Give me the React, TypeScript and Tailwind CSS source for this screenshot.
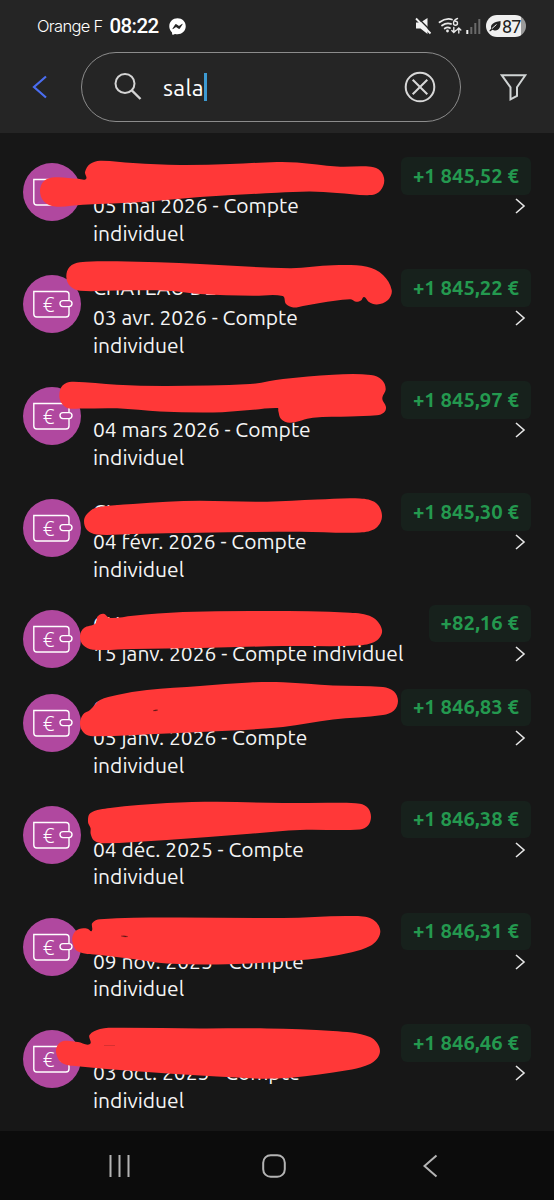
import React from "react";
import { FaFacebookMessenger } from "react-icons/fa";

interface Transaction {
  title: string;
  date: string;
  amount: string;
  short?: boolean;
}

const transactions: Transaction[] = [
  { title: "", date: "05 mai 2026", amount: "+1 845,52 €" },
  { title: "CHATEAU DE", date: "03 avr. 2026", amount: "+1 845,22 €" },
  { title: "", date: "04 mars 2026", amount: "+1 845,97 €" },
  { title: "CHAT", date: "04 févr. 2026", amount: "+1 845,30 €" },
  { title: "CHAT", date: "15 janv. 2026", amount: "+82,16 €", short: true },
  { title: "C", date: "05 janv. 2026", amount: "+1 846,83 €" },
  { title: "", date: "04 déc. 2025", amount: "+1 846,38 €" },
  { title: "", date: "09 nov. 2025", amount: "+1 846,31 €" },
  { title: "", date: "03 oct. 2025", amount: "+1 846,46 €" },
];

type Point = [number, number];

// Outlines of the marker strokes, clockwise from the left end
const strokes: Point[][] = [
  [[40, 191], [44, 181], [55, 177.3], [78, 178.8], [86, 179], [85, 172], [90, 164], [100, 160.7], [133, 163], [180, 165], [230, 164], [277, 162], [297, 162.5], [337, 166.5], [371, 166.8], [380.5, 171], [384.3, 180.5], [380.5, 190.5], [372, 195], [337, 193], [310, 191.5], [277, 192.8], [200, 197], [143, 202], [83, 204.8], [55, 206.5], [44, 201.5]],
  [[66.3, 276.7], [69.5, 267], [80, 262.3], [117, 261.3], [200, 264], [290, 268.3], [333, 265.3], [367, 266.8], [383, 275], [391.7, 290], [388, 300], [377, 304.5], [369, 302], [364, 297], [361, 300.5], [356, 301.7], [350, 299.3], [320, 303], [303, 306], [293.3, 307.5], [286, 304], [282.7, 296], [253, 295.8], [200, 294], [167, 290.7], [117, 290.5], [80, 290.7], [70, 286]],
  [[59.3, 395], [62.5, 385.5], [71.7, 381.7], [117, 384.7], [167, 386], [250, 384], [283, 379], [333, 374.7], [371, 375], [382, 380], [385.7, 389], [382.3, 398.5], [386, 407], [384, 412.5], [377, 415.3], [350, 416.5], [313, 417.7], [290, 422.7], [281, 419], [278.3, 411], [277.7, 408], [250, 410], [213, 412.5], [160, 411.5], [117, 408.3], [80, 408.5], [68, 408.2], [61.5, 403]],
  [[84, 521], [87, 514], [96.7, 507.5], [133, 504], [167, 501.7], [200, 500.7], [267, 501.7], [317, 499.5], [360, 498.5], [376, 503], [382, 516], [376, 528], [360, 532.5], [300, 531.7], [200, 532.8], [133, 534], [96.7, 534.5], [87, 530]],
  [[80, 636], [84, 628], [95.5, 623.5], [97.5, 616.5], [103.5, 613.7], [110, 618], [133, 615.7], [183, 612], [267, 611], [350, 612.7], [372, 617], [382, 630], [376, 641], [357, 645.5], [283, 646], [200, 648], [133, 649], [93, 649.7], [83, 645]],
  [[80, 724], [83, 714.5], [90, 710], [100, 700], [117, 695], [147, 690], [200, 686], [250, 682.5], [283, 682.3], [333, 685.5], [383, 687], [394, 691.5], [398, 701], [394, 710.5], [383, 715], [333, 719.5], [283, 727], [233, 730.5], [167, 733.5], [93, 736.3], [84, 733]],
  [[88, 822], [90.5, 813], [110, 808], [167, 803], [217, 801.7], [283, 803], [333, 802.7], [360, 803.7], [368, 808], [371, 817], [368, 825.5], [360, 829.5], [300, 830], [250, 833.7], [167, 840], [103, 843.3], [94, 840.5], [90.7, 834], [90.5, 828]],
  [[72.3, 941], [74, 933], [79, 929], [87.5, 928.7], [91.7, 931], [92.3, 923], [100, 919.3], [167, 917.5], [283, 918], [350, 916], [372, 919], [380.3, 932], [370, 946], [333, 956], [283, 961.5], [217, 964.5], [167, 963.5], [133, 959], [100, 955], [78, 951.5]],
  [[56, 1052], [58.5, 1044], [65, 1040.8], [78, 1042], [90, 1044], [89.5, 1035], [100, 1029], [117, 1027.7], [200, 1028.5], [267, 1028.5], [333, 1031], [370, 1037], [380, 1051], [370, 1064], [333, 1072.5], [277, 1078.5], [217, 1076.5], [133, 1071], [80, 1066.5], [62, 1063]],
];

// Closed curve running through every point
const toPath = (points: Point[]) => {
  const n = points.length;
  let d = `M${points[0][0]} ${points[0][1]}`;
  for (let i = 0; i < n; i++) {
    const a = points[(i - 1 + n) % n];
    const b = points[i];
    const c = points[(i + 1) % n];
    const e = points[(i + 2) % n];
    const len = Math.hypot(c[0] - b[0], c[1] - b[1]);
    const before = Math.hypot(c[0] - a[0], c[1] - a[1]) || 1;
    const after = Math.hypot(e[0] - b[0], e[1] - b[1]) || 1;
    const k = len / 3;
    const x1 = b[0] + ((c[0] - a[0]) / before) * k;
    const y1 = b[1] + ((c[1] - a[1]) / before) * k;
    const x2 = c[0] - ((e[0] - b[0]) / after) * k;
    const y2 = c[1] - ((e[1] - b[1]) / after) * k;
    d += `C${x1} ${y1} ${x2} ${y2} ${c[0]} ${c[1]}`;
  }
  return d + "Z";
};

const StatusBar: React.FC = () => (
  <div className="flex h-[52px] items-center pl-[37px] pr-[28px] text-white font-['Roboto',sans-serif]">
    <span className="w-[72.5px] whitespace-nowrap font-['Inter',sans-serif] text-[16.5px] font-light tracking-[-0.7px]">
      Orange F
    </span>
    <span className="w-[59.5px] whitespace-nowrap text-[20.5px] font-medium tracking-[-0.6px]">
      08:22
    </span>
    <FaFacebookMessenger className="mt-px size-[17px]" />
    <svg className="ml-auto h-[22px] w-[66px]" viewBox="415 15 66 22" fill="none">
      <path d="M416 22.5h4.500l7-4.500v16l-7-5.500H416z" fill="#f2f2f2" />
      <path d="M417.500 17.500L432 32" stroke="#252525" strokeWidth="1.400" />
      <path d="M416 18.500L430.500 33.500" stroke="#f2f2f2" strokeWidth="1.800" />
      <g stroke="#e8e8e8" strokeWidth="1.8" strokeLinecap="round">
        <path d="M439.5 22.3q6.500-4.800 12.500-2.800" />
        <path d="M442 25.500q4.500-3.200 9-1.600" />
        <path d="M444.700 28.500q2.800-1.900 5.300-.4" />
        <path d="M457.500 18.500q-4 1.500-4 4.700a2 2 0 1 0 2-2" strokeWidth="1.400" />
        <path d="M453.800 27.500v5m-2-2l2 2 2-2M458.800 33v-5m-2 2l2-2 2 2" strokeWidth="1.400" />
      </g>
      <circle cx="447.500" cy="31" r="1.400" fill="#e8e8e8" />
      <path d="M467.300 30v4" stroke="#f2f2f2" strokeWidth="2" />
      <path d="M471.300 27v7M475.300 23v11M479.300 19v15" stroke="#6a6a6a" strokeWidth="2" />
    </svg>
    <div className="ml-[5px] flex h-[22px] w-[40px] items-center overflow-hidden rounded-full bg-linear-to-r from-[#f0f0f0] from-[88%] to-[#9a9a9a] to-[88%] pl-[3px] text-[#222]">
      <svg className="h-[12px] w-[12px] shrink-0" viewBox="0 0 12 12">
        <path d="M11.500 1C12 7 10 10.500 6.500 10.500c-1.500 0-2.300-.3-3-.8L1 11.500l-.7-.8L2.300 8.500C1 4.500 4.500 2 11.500 1z" fill="#222" />
        <path d="M3 8.500l4.500-4" stroke="#f0f0f0" strokeWidth="1" />
      </svg>
      <span className="ml-px text-[18px] tracking-[-0.8px]">87</span>
    </div>
  </div>
);

const SearchHeader: React.FC = () => (
  <div className="flex h-[70px] items-center pl-[32px] pr-[27px]">
    <svg className="h-[24px] w-[16px]" viewBox="0 0 16 24" fill="none">
      <path d="M14 1.500L2 12 14 22.500" stroke="#4a6df0" strokeWidth="2.200" />
    </svg>
    <div className="ml-[33px] flex h-[69.5px] w-[380px] items-center rounded-full border-[1.500px] border-[#8c8c8c] pl-[32px] pr-[24px]">
      <svg className="size-[28px]" viewBox="0 0 28 28" fill="none" stroke="#d4d4d4" strokeWidth="2">
        <circle cx="11" cy="10.500" r="9.500" />
        <path d="M17.800 17.300L26.500 26" strokeWidth="2.400" />
      </svg>
      <span className="ml-[21px] mt-[2px] text-[23px] tracking-[0.3px] text-white">
        sala
      </span>
      <span className="h-[28px] w-[3px] bg-[#3d9ad1]"></span>
      <svg className="ml-auto size-[32px]" viewBox="0 0 32 32" fill="none" stroke="#d8d8d8">
        <circle cx="16" cy="16" r="14.300" strokeWidth="2" />
        <path d="M8.700 8.700l14.600 14.600M23.300 8.700L8.700 23.300" strokeWidth="2" />
      </svg>
    </div>
    <svg className="ml-auto h-[28px] w-[27px]" viewBox="0 0 27 28" fill="none">
      <path
        d="M1.700 2.200h23.600L17 14.300v8.500l-6.500 3.500v-12z"
        stroke="#d0d4d4"
        strokeWidth="2"
      />
    </svg>
  </div>
);

const WalletIcon: React.FC = () => (
  <svg className="mt-[15.500px] size-[58px] shrink-0" viewBox="0 0 58 58" fill="none">
    <circle cx="29" cy="29" r="29" fill="#b0489f" />
    <g stroke="#fff" strokeWidth="1.400">
      <path d="M46 25.300V19.500a3 3 0 0 0-3-3H10.800V39a3 3 0 0 0 3 3H43a3 3 0 0 0 3-3v-7.300" />
      <rect x="37" y="25.600" width="12" height="6" rx="3" />
    </g>
    <text
      x="25.500"
      y="36.700"
      textAnchor="middle"
      fill="#fff"
      fontSize="20.5"
      className="font-['Noto_Sans',sans-serif] font-light"
    >
      €
    </text>
  </svg>
);

const TransactionRow: React.FC<Transaction> = ({
  title,
  date,
  amount,
  short,
}) => {
  return (
    <li
      className={
        short
          ? "flex h-[84px] pl-[23px] pr-[23px]"
          : "flex h-[111.850px] pl-[23px] pr-[23px]"
      }
    >
      <WalletIcon />
      <div className="ml-[12px] w-0 grow pt-[15px] text-[21px] leading-[27.700px] text-[#f5f5f5]">
        <p className="h-[30px] whitespace-nowrap">{title}</p>
        <p className="whitespace-nowrap">
          {date} - Compte
          {short ? " " : <br />}
          individuel
        </p>
      </div>
      <div className="flex flex-col items-end pt-[10px]">
        <span className="flex h-[37.500px] items-center rounded-[6px] bg-[#17211c] px-[12px] text-[20.300px] font-bold whitespace-nowrap text-[#24994f]">
          {amount}
        </span>
        <svg className="mt-[3.500px] mr-[5px] h-[16px] w-[12px]" viewBox="0 0 12 16" fill="none">
          <path d="M2 1l8 7-8 7" stroke="#e6e6e6" strokeWidth="1.600" />
        </svg>
      </div>
    </li>
  );
};

const NavigationBar: React.FC = () => (
  <div className="flex h-[69.500px] items-center bg-[#0c0c0c] pt-[2px] pl-[108px]">
    <svg className="h-[24px] w-[24px]" viewBox="0 0 24 24">
      <path d="M2.500 1v22M11.500 1v22M20.500 1v22" stroke="#b4b4b4" strokeWidth="2" />
    </svg>
    <svg className="ml-[130px] h-[24px] w-[24px]" viewBox="0 0 24 24" fill="none">
      <rect x="1.200" y="1.200" width="21.600" height="21.600" rx="7.500" stroke="#b4b4b4" strokeWidth="2" />
    </svg>
    <svg className="ml-[135.500px] h-[24px] w-[17px]" viewBox="0 0 17 24" fill="none">
      <path d="M14.500 1.500L2.500 12l12 10.500" stroke="#b4b4b4" strokeWidth="2" />
    </svg>
  </div>
);

const App: React.FC = () => {
  return (
    <div className="relative flex h-[1200px] w-[554px] flex-col overflow-hidden bg-[#171717] font-['Ubuntu','Noto_Sans',sans-serif]">
      <header className="h-[133.300px] shrink-0 bg-[#252525]">
        <StatusBar />
        <SearchHeader />
      </header>
      <ul className="h-0 grow overflow-hidden pt-[14.200px]">
        {transactions.map((t) => (
          <TransactionRow key={t.date} {...t} />
        ))}
      </ul>
      <NavigationBar />
      <svg
        className="pointer-events-none absolute inset-0 h-[1200px] w-[554px]"
        viewBox="0 0 554 1200"
      >
        {strokes.map((points, i) => (
          <path key={i} d={toPath(points)} fill="#ff3838" />
        ))}
        {/* gaps the marker left open */}
        <path d="M153 710.800q2.500-1.600 5-.8q-2 1.200-5 .8zM121 936q4-.8 7 .6q-3 .8-5-.1zM104 1045.500h11" fill="#4a1515" stroke="#7a2020" strokeWidth=".3" />
      </svg>
    </div>
  );
};

export default App;
